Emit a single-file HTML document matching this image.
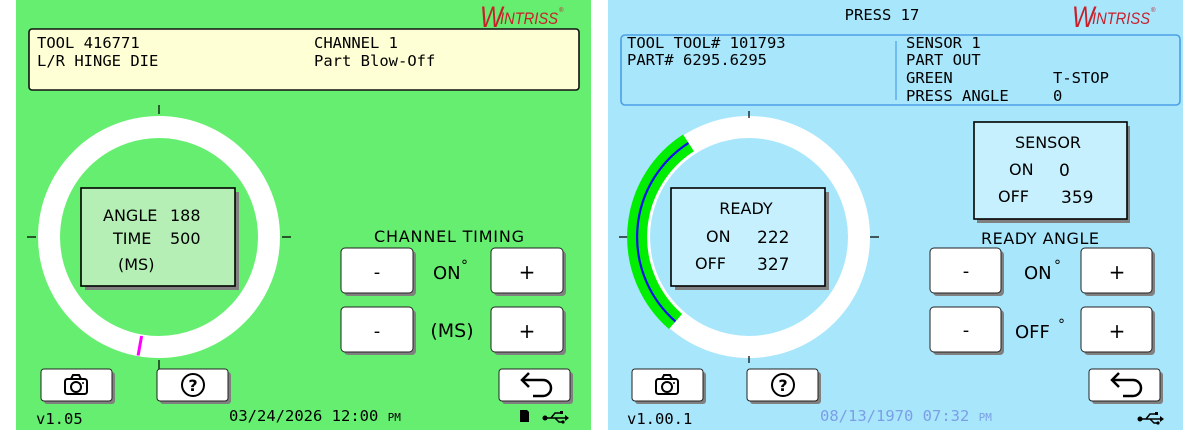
<!DOCTYPE html>
<html><head><meta charset="utf-8"><style>
html,body{margin:0;padding:0;background:#fff;}
svg{display:block}
.m{font-family:"DejaVu Sans Mono","Liberation Mono",monospace;font-size:15.5px;fill:#000}
.s{font-family:"DejaVu Sans","Liberation Sans",sans-serif;fill:#000}
.logo{font-family:"Liberation Sans",sans-serif;font-style:italic;fill:#c8202a}
</style></head><body>
<svg width="1200" height="430" viewBox="0 0 1200 430" xmlns="http://www.w3.org/2000/svg">
<defs>
<g id="cam"><rect x="-11" y="-7" width="22" height="15" rx="2.5" fill="none" stroke="#000" stroke-width="2"/><path d="M-5,-7 L-3,-11 L3,-11 L5,-7" fill="none" stroke="#000" stroke-width="2"/><circle cx="0" cy="1" r="5" fill="none" stroke="#000" stroke-width="2"/><circle cx="7" cy="-3" r="1" fill="#000"/></g>
<g id="help"><circle cx="0" cy="0" r="11" fill="none" stroke="#000" stroke-width="2"/><text x="0" y="6" text-anchor="middle" class="s" font-size="16" font-weight="bold">?</text></g>
<g id="back"><path d="M-12,-4 L8,-4 A8,8 0 0 1 8,12 L-2,12" fill="none" stroke="#000" stroke-width="2.5"/><path d="M-6,-11 L-13,-4 L-6,3" fill="none" stroke="#000" stroke-width="2.5"/></g>
<g id="usb"><circle cx="-9" cy="0" r="2.5" fill="#000"/><path d="M-9,0 L11,0 M-3,0 L1,-5 L6,-5 M1,0 L5,4 L8,4" fill="none" stroke="#000" stroke-width="1.5"/><path d="M11,-3 L15,0 L11,3Z" fill="#000"/><rect x="6" y="-7" width="3" height="3" fill="#000"/><circle cx="9" cy="4" r="1.6" fill="#000"/></g>
</defs>

<!-- LEFT PANEL -->
<rect x="16" y="0" width="575" height="430" fill="#66ee70"/>
<text x="480" y="27" class="logo" font-size="30" transform="translate(480 0) scale(0.8 1) translate(-480 0)">W</text><text x="500" y="24" class="logo" font-size="17" textLength="58" lengthAdjust="spacingAndGlyphs">INTRISS</text>
<text x="559" y="12" class="logo" font-size="6">®</text>
<rect x="29" y="29" width="550" height="61" rx="3" fill="#ffffd6" stroke="#111" stroke-width="1.6"/>
<text x="37" y="48" class="m">TOOL 416771</text>
<text x="37" y="66" class="m">L/R HINGE DIE</text>
<text x="314" y="48" class="m">CHANNEL 1</text>
<text x="314" y="66" class="m">Part Blow-Off</text>

<circle cx="159" cy="237" r="110" fill="none" stroke="#fff" stroke-width="22"/>
<path d="M159,105 V114 M159,360 V369 M27,237 H36 M282,237 H291" stroke="#000" stroke-width="1.2"/>
<line x1="141.6" y1="336" x2="138.1" y2="355.5" stroke="#ff00ff" stroke-width="3"/>
<rect x="85" y="192" width="154" height="98" fill="#808080"/>
<rect x="81" y="188" width="154" height="98" fill="#b5efb5" stroke="#000" stroke-width="1.6"/>
<text x="103" y="221" class="s" font-size="16">ANGLE</text><text x="170" y="221" class="s" font-size="16">188</text>
<text x="113" y="244" class="s" font-size="16">TIME</text><text x="170" y="244" class="s" font-size="16">500</text>
<text x="118" y="270" class="s" font-size="16">(MS)</text>

<text x="449" y="242" text-anchor="middle" class="s" font-size="16" textLength="150">CHANNEL TIMING</text>
<g>
<rect x="344" y="251" width="72" height="45" rx="4" fill="#808080"/><rect x="341" y="248" width="72" height="45" rx="4" fill="#fff" stroke="#222"/>
<rect x="494" y="251" width="72" height="45" rx="4" fill="#808080"/><rect x="491" y="248" width="72" height="45" rx="4" fill="#fff" stroke="#222"/>
<rect x="344" y="310" width="72" height="45" rx="4" fill="#808080"/><rect x="341" y="307" width="72" height="45" rx="4" fill="#fff" stroke="#222"/>
<rect x="494" y="310" width="72" height="45" rx="4" fill="#808080"/><rect x="491" y="307" width="72" height="45" rx="4" fill="#fff" stroke="#222"/>
<text x="377" y="278" text-anchor="middle" class="s" font-size="18">-</text>
<text x="527" y="279" text-anchor="middle" class="s" font-size="20">+</text>
<text x="377" y="337" text-anchor="middle" class="s" font-size="18">-</text>
<text x="527" y="338" text-anchor="middle" class="s" font-size="20">+</text>
<text x="433" y="279" class="s" font-size="18">ON</text><text x="461" y="270" class="s" font-size="14">°</text>
<text x="452" y="337" text-anchor="middle" class="s" font-size="19">(MS)</text>
</g>
<rect x="44" y="372" width="71" height="32" rx="3" fill="#808080"/><rect x="41" y="369" width="71" height="32" rx="3" fill="#fff" stroke="#222"/>
<rect x="160" y="372" width="71" height="32" rx="3" fill="#808080"/><rect x="157" y="369" width="71" height="32" rx="3" fill="#fff" stroke="#222"/>
<rect x="502" y="372" width="71" height="32" rx="3" fill="#808080"/><rect x="499" y="369" width="71" height="32" rx="3" fill="#fff" stroke="#222"/>
<use href="#cam" x="76" y="386"/><use href="#help" x="193" y="385"/><use href="#back" x="535" y="384"/>
<text x="36" y="424" class="m" font-size="10">v1.05</text>
<text x="229" y="421" class="m" font-size="14">03/24/2026 12:00 <tspan font-size="11">PM</tspan></text>
<path d="M520,410 L527,410 L529,412 L529,422 L520,422Z" fill="#000"/>
<use href="#usb" x="554" y="418"/>

<!-- RIGHT PANEL -->
<rect x="608" y="0" width="575" height="430" fill="#a8e6fc"/>
<text x="882" y="20" text-anchor="middle" class="m">PRESS 17</text>
<text x="1072" y="27" class="logo" font-size="30" transform="translate(1072 0) scale(0.8 1) translate(-1072 0)">W</text><text x="1092" y="24" class="logo" font-size="17" textLength="58" lengthAdjust="spacingAndGlyphs">INTRISS</text>
<text x="1151" y="12" class="logo" font-size="6">®</text>
<rect x="621" y="35" width="559" height="70" rx="4" fill="#a8e6fc" stroke="#4a9fe6" stroke-width="1.6"/>
<line x1="896" y1="41" x2="896" y2="100" stroke="#4a9fe6" stroke-width="1.2"/>
<text x="627" y="48" class="m">TOOL TOOL# 101793</text>
<text x="627" y="65" class="m">PART# 6295.6295</text>
<text x="906" y="48" class="m">SENSOR 1</text>
<text x="906" y="65" class="m">PART OUT</text>
<text x="906" y="83" class="m">GREEN</text><text x="1053" y="83" class="m">T-STOP</text>
<text x="906" y="101" class="m">PRESS ANGLE</text><text x="1053" y="101" class="m">0</text>

<circle cx="749" cy="237" r="110" fill="none" stroke="#fff" stroke-width="22"/>
<path d="M749,111 V118 M749,356 V363 M619,237 H628 M870,237 H879" stroke="#000" stroke-width="1.2"/>
<path d="M688.5,142.9 A112,112 0 0 0 675.5,321.5" fill="none" stroke="#00ee00" stroke-width="20"/>
<path d="M688.5,142.9 A112,112 0 0 0 675.5,321.5" fill="none" stroke="#1010ee" stroke-width="2.2"/>
<rect x="675" y="192" width="154" height="98" fill="#808080"/>
<rect x="671" y="188" width="154" height="98" fill="#c6f0fd" stroke="#000" stroke-width="1.6"/>
<text x="746" y="214" text-anchor="middle" class="s" font-size="16">READY</text>
<text x="706" y="242" class="s" font-size="16">ON</text><text x="757" y="243" class="s" font-size="17">222</text>
<text x="695" y="269" class="s" font-size="16">OFF</text><text x="757" y="270" class="s" font-size="17">327</text>

<rect x="977" y="126" width="153" height="97" fill="#808080"/>
<rect x="974" y="122" width="153" height="97" fill="#c6f0fd" stroke="#000" stroke-width="1.6"/>
<text x="1048" y="148" text-anchor="middle" class="s" font-size="16">SENSOR</text>
<text x="1009" y="175" class="s" font-size="16">ON</text><text x="1059" y="176" class="s" font-size="17">0</text>
<text x="998" y="202" class="s" font-size="16">OFF</text><text x="1061" y="203" class="s" font-size="17">359</text>

<text x="1040" y="244" text-anchor="middle" class="s" font-size="16" textLength="118">READY ANGLE</text>
<rect x="933" y="251" width="71" height="45" rx="4" fill="#808080"/><rect x="930" y="248" width="71" height="45" rx="4" fill="#fff" stroke="#222"/>
<rect x="1084" y="251" width="71" height="45" rx="4" fill="#808080"/><rect x="1081" y="248" width="71" height="45" rx="4" fill="#fff" stroke="#222"/>
<rect x="933" y="310" width="71" height="45" rx="4" fill="#808080"/><rect x="930" y="307" width="71" height="45" rx="4" fill="#fff" stroke="#222"/>
<rect x="1084" y="310" width="71" height="45" rx="4" fill="#808080"/><rect x="1081" y="307" width="71" height="45" rx="4" fill="#fff" stroke="#222"/>
<text x="966" y="277" text-anchor="middle" class="s" font-size="18">-</text>
<text x="1117" y="279" text-anchor="middle" class="s" font-size="20">+</text>
<text x="966" y="336" text-anchor="middle" class="s" font-size="18">-</text>
<text x="1117" y="338" text-anchor="middle" class="s" font-size="20">+</text>
<text x="1024" y="279" class="s" font-size="18">ON</text><text x="1054" y="270" class="s" font-size="14">°</text>
<text x="1015" y="338" class="s" font-size="18">OFF</text><text x="1058" y="329" class="s" font-size="14">°</text>

<rect x="635" y="372" width="71" height="32" rx="3" fill="#808080"/><rect x="632" y="369" width="71" height="32" rx="3" fill="#fff" stroke="#222"/>
<rect x="750" y="372" width="71" height="32" rx="3" fill="#808080"/><rect x="747" y="369" width="71" height="32" rx="3" fill="#fff" stroke="#222"/>
<rect x="1092" y="372" width="71" height="32" rx="3" fill="#808080"/><rect x="1089" y="369" width="71" height="32" rx="3" fill="#fff" stroke="#222"/>
<use href="#cam" x="667" y="386"/><use href="#help" x="783" y="385"/><use href="#back" x="1125" y="384"/>
<text x="627" y="424" class="m" font-size="10">v1.00.1</text>
<text x="820" y="421" class="m" font-size="14" style="fill:#7c9ee6">08/13/1970 07:32 <tspan font-size="11">PM</tspan></text>
<use href="#usb" x="1149" y="419"/>
</svg>
</body></html>
